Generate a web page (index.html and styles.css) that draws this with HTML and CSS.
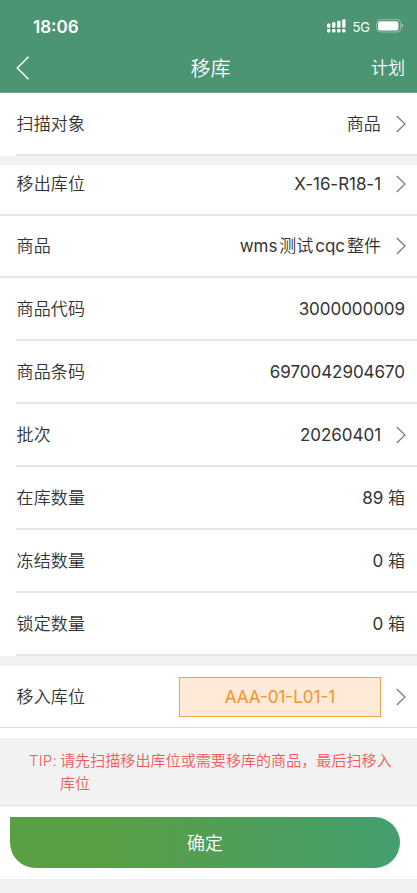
FILE: index.html
```html
<!DOCTYPE html>
<html lang="zh-CN">
<head>
<meta charset="UTF-8">
<meta name="viewport" content="width=device-width, initial-scale=1">
<title>移库</title>
<link rel="stylesheet" href="styles.css">
</head>
<body>
<header class="header">
  <div class="status">
    <span class="time">18:06</span>
    <div class="indicators">
      <svg class="signal" width="19" height="14" viewBox="0 0 19 14" fill="currentColor">
        <rect x="0" y="4.5" width="3.3" height="4.2" rx="1"/><rect x="5.1" y="3.3" width="3.3" height="5.4" rx="1"/><rect x="10.2" y="1.8" width="3.3" height="6.9" rx="1"/><rect x="15.2" y="0.2" width="3.3" height="8.5" rx="1"/>
        <rect x="0" y="10" width="3.3" height="3.4" rx="1.2"/><rect x="5.1" y="10" width="3.3" height="3.4" rx="1.2"/><rect x="10.2" y="10" width="3.3" height="3.4" rx="1.2"/><rect x="15.2" y="10" width="3.3" height="3.4" rx="1.2"/>
      </svg>
      <span class="network">5G</span>
      <svg class="battery" width="28" height="14" viewBox="0 0 28 14">
        <rect x="0.6" y="0.6" width="24" height="12.4" rx="3.6" fill="none" stroke="#fff" stroke-opacity=".4"/>
        <rect x="2" y="2.2" width="20.4" height="9.2" rx="2.2" fill="#fff"/>
        <path d="M25.7 4.8Q27.2 5.3 27.2 6.8T25.7 8.8Z" fill="#fff" fill-opacity=".5"/>
      </svg>
    </div>
  </div>
  <nav class="nav">
    <svg class="back" width="14" height="24" viewBox="0 0 14 24"><path d="M12.5 .8L1.2 12L12.5 23.2"/></svg>
    <h1 class="title">移库</h1>
    <span class="plan">计划</span>
  </nav>
</header>

<main>
  <section class="group group-target">
    <div class="row"><span>扫描对象</span><span class="value">商品</span><svg class="chevron" viewBox="0 0 10 18"><path d="M.8 1L9 9L.8 17"/></svg></div>
  </section>

  <section class="group">
    <div class="row row-source"><span>移出库位</span><span class="value latin">X-16-R18-1</span><svg class="chevron" viewBox="0 0 10 18"><path d="M.8 1L9 9L.8 17"/></svg></div>
    <div class="row row-product"><span>商品</span><span class="value name"><span class="latin">wms</span><i></i>测试<i></i><span class="latin">cqc</span><i></i>整件</span><svg class="chevron" viewBox="0 0 10 18"><path d="M.8 1L9 9L.8 17"/></svg></div>
    <div class="row"><span>商品代码</span><span class="value latin">3000000009</span></div>
    <div class="row"><span>商品条码</span><span class="value latin">6970042904670</span></div>
    <div class="row"><span>批次</span><span class="value latin">20260401</span><svg class="chevron" viewBox="0 0 10 18"><path d="M.8 1L9 9L.8 17"/></svg></div>
    <div class="row"><span>在库数量</span><span class="value quantity"><span class="latin">89</span> 箱</span></div>
    <div class="row"><span>冻结数量</span><span class="value quantity"><span class="latin">0</span> 箱</span></div>
    <div class="row"><span>锁定数量</span><span class="value quantity"><span class="latin">0</span> 箱</span></div>
  </section>

  <section class="group group-destination">
    <div class="row row-destination"><span>移入库位</span><span class="value slot">AAA-01-L01-1</span><svg class="chevron" viewBox="0 0 10 18"><path d="M.8 1L9 9L.8 17"/></svg></div>
  </section>

  <div class="tip"><span class="tip-label">TIP:</span><p class="tip-text">请先扫描移出库位或需要移库的商品，最后扫移入库位</p></div>
</main>

<footer class="footer"><button class="confirm" type="button">确定</button></footer>
</body>
</html>
```
FILE: styles.css
```css
* {
  box-sizing: border-box;
}

body {
  margin: 0;
  min-height: 893px;
  background: #f2f2f2;
  color: #333;
  font-family: Inter, "Noto Sans CJK SC", sans-serif;
  font-size: 17px;
  font-weight: 350;
  line-height: 24px;
}

.header {
  height: 93px;
  background: #4c9573;
  border-bottom: 1px solid #71aa8e;
  color: #fff;
}

.status {
  display: flex;
  align-items: center;
  justify-content: space-between;
  height: 43px;
  padding: 10px 13px 0 33px;
}

.time {
  font-size: 17px;
  font-weight: 600;
  letter-spacing: 0;
}

.indicators {
  display: flex;
  align-items: center;
  margin-top: -1px;
}

.network {
  margin: 0 6px 0 6px;
  padding-top: 1px;
  font-size: 13px;
  font-weight: 400;
}

.nav {
  display: grid;
  grid-template-columns: 60px 1fr 60px;
  align-items: center;
  height: 50px;
  padding: 0 12px 0 16px;
}

.back {
  fill: none;
  stroke: #fff;
  stroke-width: 1.5;
}

.title {
  margin: 0;
  padding-top: 1px;
  font-size: 20px;
  font-weight: 350;
  text-align: center;
}

.plan {
  text-align: right;
}

.group {
  background: #fff;
}

.row {
  display: flex;
  align-items: center;
  height: 63px;
  margin-left: 16px;
  padding-right: 12px;
  border-bottom: 2px solid #e7e7e7;
  letter-spacing: 0.15px;
}

.row > span:first-child {
  padding-left: 0.5px;
}

.group-target {
  margin-bottom: 9px;
}

.row-source {
  height: 51px;
  margin-left: 0;
  padding: 0 12px 11px 16px;
}

.row-product {
  height: 62px;
  margin-left: 0;
  padding-left: 16px;
}

.value {
  margin-left: auto;
}

.latin {
  font-weight: 400;
  letter-spacing: -0.05px;
}

.quantity,
.name {
  letter-spacing: 0;
}

.name i {
  display: inline-block;
  width: 2px;
}

.chevron {
  width: 10px;
  height: 18px;
  margin: 0 -1px 0 15px;
  fill: none;
  stroke: #777;
  stroke-width: 1.2;
}

.group-destination {
  height: 72px;
  margin-top: 10px;
}

.row-destination {
  height: 62px;
  margin-left: 0;
  padding-left: 16px;
  border-bottom-width: 1px;
  border-color: #ddd;
}

.slot {
  width: 202px;
  height: 40px;
  border: 1px solid #f2a24a;
  background: #ffe9d7;
  color: #f7922d;
  font-weight: 400;
  letter-spacing: 0;
  line-height: 38px;
  text-align: center;
}

.tip {
  display: flex;
  height: 68px;
  padding: 11px 23px 0 29px;
  border-bottom: 1px solid #e2e2e2;
  color: #f25b5b;
  font-size: 15px;
  line-height: 23px;
}

.tip-label {
  flex: 0 0 31px;
  letter-spacing: 0.2px;
}

.tip-text {
  margin: 0;
  letter-spacing: 0.08px;
}

.footer {
  height: 73px;
  padding: 11px 17px 0 10px;
  background: #fff;
}

.confirm {
  display: block;
  width: 390px;
  height: 51px;
  padding: 2px 0 0;
  border: 0;
  border-radius: 0 26px 26px 26px;
  background: linear-gradient(90deg, #5a9f44 0%, #5a9f44 22%, #449f70 100%);
  color: #fff;
  font: inherit;
  font-size: 18px;
}
```
